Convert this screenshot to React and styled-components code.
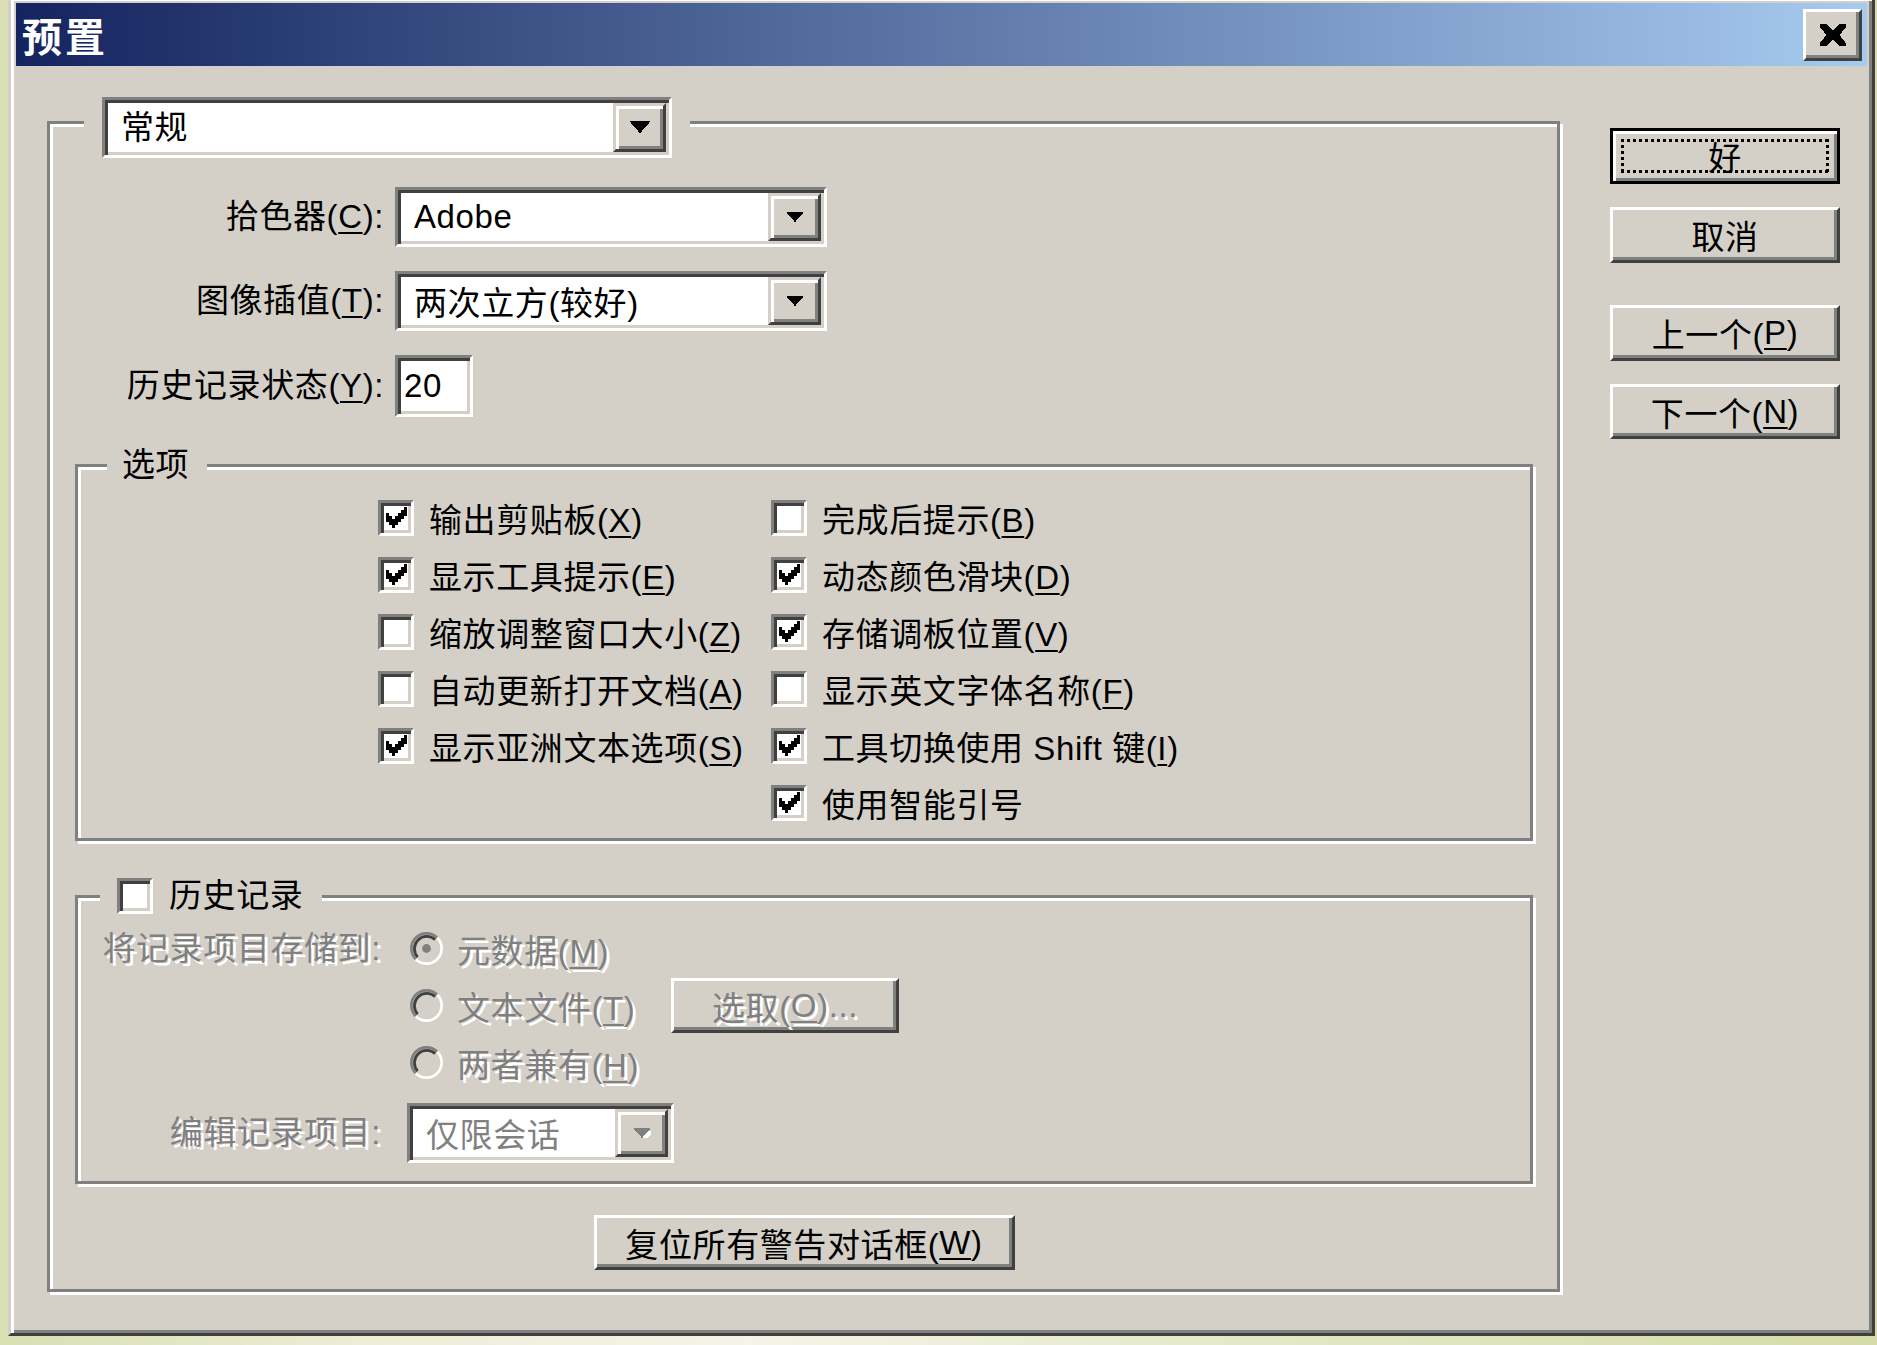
import React from 'react';
import styled, { createGlobalStyle, css } from 'styled-components';

const FONT = `"Liberation Sans", "Noto Sans CJK SC", sans-serif`;

const GlobalStyle = createGlobalStyle`
  html, body {
    margin: 0;
    padding: 0;
  }
  body {
    width: 1877px;
    height: 1345px;
    overflow: hidden;
    background: linear-gradient(90deg, #d8dfb2 0%, #eceed6 20%, #f4f4e8 40%, #e4e9c8 65%, #d5dca8 100%);
    font-family: ${FONT};
    font-size: 33px;
    letter-spacing: 0.6px;
    color: #000;
  }
`;

const sunken = css`
  border: 3px solid;
  border-color: #808080 #fff #fff #808080;
  box-shadow: inset 3px 3px 0 #404040, inset -3px -3px 0 #d4d0c8;
`;

const raised = css`
  border: 3px solid;
  border-color: #fff #404040 #404040 #fff;
  box-shadow: inset -3px -3px 0 #808080;
`;

const Page = styled.div`
  padding-left: 8px;
`;

const Dialog = styled.div`
  box-sizing: border-box;
  width: 1867px;
  height: 1341px;
  margin-top: -5px;
  padding: 5px;
  display: flex;
  flex-direction: column;
  background: #d4d0c8;
  border: 3px solid;
  border-color: #d4d0c8 #404040 #404040 #d4d0c8;
  box-shadow: inset 3px 3px 0 #fff, inset -3px -3px 0 #808080;
`;

const TitleBar = styled.div`
  flex: none;
  height: 63px;
  display: flex;
  align-items: center;
  justify-content: space-between;
  padding: 0 5px 0 6px;
  background: linear-gradient(90deg, #15245f 0%, #a6caf0 100%);
`;

const Title = styled.span`
  font-family: "Noto Sans CJK SC", sans-serif;
  font-weight: 700;
  font-size: 40px;
  letter-spacing: 3px;
  line-height: 1;
  color: #fff;
`;

const CloseButton = styled.span`
  box-sizing: border-box;
  width: 59px;
  height: 52px;
  display: flex;
  align-items: center;
  justify-content: center;
  background: #d4d0c8;
  ${raised}
`;

const Body = styled.div`
  flex: 1;
  display: flex;
  align-items: flex-start;
  padding: 31px 0 0 31px;
`;

const Group = styled.fieldset`
  box-sizing: border-box;
  margin: ${p => p.$top || 0}px 0 0 0;
  padding: 0;
  min-width: 0;
  width: ${p => (p.$width ? `${p.$width}px` : 'auto')};
  border: 3px solid #808080;
  box-shadow: inset 3px 3px 0 #fff, 3px 3px 0 #fff;
`;

const Legend = styled.legend`
  box-sizing: border-box;
  display: flex;
  align-items: ${p => (p.$alignTop ? 'flex-start' : 'center')};
  gap: 16px;
  height: ${p => p.$h || 40}px;
  margin-left: ${p => p.$left}px;
  padding: 0 ${p => p.$padR}px 0 ${p => p.$padL}px;
  background: #d4d0c8;
  line-height: 40px;
  white-space: nowrap;
`;

const MainBody = styled.div`
  display: flex;
  flex-direction: column;
  padding: 39px 24px 19px 25px;
`;

const FieldGrid = styled.div`
  display: grid;
  grid-template-columns: ${p => p.$label}px auto;
  column-gap: ${p => p.$gap}px;
  row-gap: ${p => p.$rowGap}px;
  align-items: center;
  justify-items: start;
`;

const FieldLabel = styled.span`
  justify-self: end;
  align-self: ${p => (p.$top ? 'start' : 'center')};
  line-height: ${p => (p.$top ? '57px' : '40px')};
  white-space: nowrap;
  color: ${p => (p.$disabled ? '#808080' : '#000')};
  text-shadow: ${p => (p.$disabled ? '3px 3px 0 #fff' : 'none')};
`;

const Combo = styled.div`
  box-sizing: border-box;
  width: ${p => p.$w}px;
  height: ${p => p.$h}px;
  padding: 3px;
  display: flex;
  flex: none;
  background: #fff;
  ${sunken}
`;

const ComboText = styled.span`
  flex: 1;
  display: flex;
  align-items: center;
  padding-left: ${p => p.$pad ?? 13}px;
  white-space: nowrap;
  overflow: hidden;
  color: ${p => (p.$disabled ? '#808080' : '#000')};
`;

const ArrowButton = styled.span`
  box-sizing: border-box;
  width: 53px;
  flex: none;
  display: flex;
  align-items: center;
  justify-content: center;
  background: #d4d0c8;
  border: 3px solid;
  border-color: #d4d0c8 #404040 #404040 #d4d0c8;
  box-shadow: inset 3px 3px 0 #fff, inset -3px -3px 0 #808080;
`;

const OptionsBody = styled.div`
  display: flex;
  padding: 4px 0 7px 300px;
`;

const CheckColumn = styled.div`
  display: flex;
  flex-direction: column;
  width: ${p => (p.$w ? `${p.$w}px` : 'auto')};
`;

const CheckRow = styled.div`
  height: 57px;
  display: flex;
  align-items: center;
  gap: 15px;
  white-space: nowrap;
`;

const CheckBox = styled.span`
  box-sizing: border-box;
  width: 36px;
  height: 36px;
  flex: none;
  display: flex;
  align-items: center;
  justify-content: center;
  background: #fff;
  ${sunken}
`;

const HistoryBody = styled.div`
  padding: 4px 0 18px 0;
`;

const RadioList = styled.div`
  display: flex;
  flex-direction: column;
`;

const RadioRow = styled.div`
  height: 57px;
  display: flex;
  align-items: center;
  gap: 14px;
  padding-left: 3px;
  white-space: nowrap;
`;

const Disabled = styled.span`
  color: #808080;
  text-shadow: 3px 3px 0 #fff;
  width: ${p => (p.$w ? `${p.$w}px` : 'auto')};
`;

const Button = styled.button`
  box-sizing: border-box;
  width: ${p => p.$w}px;
  height: ${p => p.$h}px;
  margin: ${p => p.$mt || 0}px 0 0 0;
  padding: 0;
  flex: none;
  display: flex;
  align-items: center;
  justify-content: center;
  font: inherit;
  letter-spacing: inherit;
  white-space: nowrap;
  color: ${p => (p.$disabled ? '#808080' : '#000')};
  text-shadow: ${p => (p.$disabled ? '3px 3px 0 #fff' : 'none')};
  background: #d4d0c8;
  ${raised}
`;

const DefaultButton = styled(Button)`
  padding: 8px;
  border: 3px solid #000;
  box-shadow: inset 3px 3px 0 #fff, inset -3px -3px 0 #808080;
`;

const FocusRing = styled.span`
  flex: 1;
  align-self: stretch;
  display: flex;
  align-items: center;
  justify-content: center;
  background:
    repeating-linear-gradient(90deg, #000 0 3px, transparent 3px 6px) top left / 100% 3px no-repeat,
    repeating-linear-gradient(90deg, #000 0 3px, transparent 3px 6px) bottom left / 100% 3px no-repeat,
    repeating-linear-gradient(180deg, #000 0 3px, transparent 3px 6px) top left / 3px 100% no-repeat,
    repeating-linear-gradient(180deg, #000 0 3px, transparent 3px 6px) top right / 3px 100% no-repeat;
`;

const ResetButton = styled(Button)`
  align-self: center;
`;

const SideColumn = styled.div`
  display: flex;
  flex-direction: column;
  margin: 31px 0 0 50px;
`;

const Key = styled.span`
  text-decoration: underline;
  text-decoration-thickness: 2px;
  text-underline-offset: 4px;
`;

const Mnemonic = ({ text }) => {
  const i = text.indexOf('&');
  if (i < 0) return text;
  return (
    <>
      {text.slice(0, i)}
      <Key>{text[i + 1]}</Key>
      {text.slice(i + 2)}
    </>
  );
};

const CHECK_PIXELS = [
  [6, 0, 1], [5, 1, 2], [0, 2, 1], [4, 2, 3], [0, 3, 2],
  [3, 3, 3], [0, 4, 5], [1, 5, 3], [2, 6, 1],
];

const CheckMark = () => (
  <svg width="21" height="21" viewBox="0 0 7 7" shapeRendering="crispEdges">
    {CHECK_PIXELS.map(([x, y, w]) => (
      <rect key={`${x}-${y}`} x={x} y={y} width={w} height="1" fill="#000" />
    ))}
  </svg>
);

const Arrow = ({ disabled, size = 18 }) => (
  <svg width={size} height={size * 0.56} viewBox="0 0 7 4" shapeRendering="crispEdges">
    {disabled && <path d="M1.5 1h7l-3.5 4z" fill="#fff" />}
    <path d="M0 0h7l-3.5 4z" fill={disabled ? '#808080' : '#000'} />
  </svg>
);

const CloseIcon = () => (
  <svg width="26" height="24" viewBox="0 0 8 7" shapeRendering="crispEdges">
    <path
      d="M0 0h2l2 2 2-2h2v1l-2 2.5 2 2.5v1h-2l-2-2-2 2h-2v-1l2-2.5-2-2.5z"
      fill="#000"
    />
  </svg>
);

const Radio = ({ checked }) => (
  <svg width="33" height="33" viewBox="0 0 12 12">
    <circle cx="6" cy="6" r="4.2" fill="#d4d0c8" />
    <path d="M2.11 9.89A5.5 5.5 0 0 1 9.89 2.11" fill="none" stroke="#808080" strokeWidth="1" />
    <path d="M2.82 9.18A4.5 4.5 0 0 1 9.18 2.82" fill="none" stroke="#404040" strokeWidth="1" />
    <path d="M9.89 2.11A5.5 5.5 0 0 1 2.11 9.89" fill="none" stroke="#fff" strokeWidth="1" />
    <path d="M9.18 2.82A4.5 4.5 0 0 1 2.82 9.18" fill="none" stroke="#d4d0c8" strokeWidth="1" />
    {checked && <circle cx="6" cy="6" r="1.6" fill="#808080" />}
  </svg>
);

const Check = ({ checked }) => <CheckBox>{checked && <CheckMark />}</CheckBox>;

const ComboField = ({ w, h, text, disabled, arrow }) => (
  <Combo $w={w} $h={h}>
    <ComboText $disabled={disabled}>{text}</ComboText>
    <ArrowButton>
      <Arrow disabled={disabled} size={arrow} />
    </ArrowButton>
  </Combo>
);

const OPTIONS_LEFT = [
  ['输出剪贴板(&X)', true],
  ['显示工具提示(&E)', true],
  ['缩放调整窗口大小(&Z)', false],
  ['自动更新打开文档(&A)', false],
  ['显示亚洲文本选项(&S)', true],
];

const OPTIONS_RIGHT = [
  ['完成后提示(&B)', false],
  ['动态颜色滑块(&D)', true],
  ['存储调板位置(&V)', true],
  ['显示英文字体名称(&F)', false],
  ['工具切换使用 Shift 键(&I)', true],
  ['使用智能引号', true],
];

const CheckList = ({ items, width }) => (
  <CheckColumn $w={width}>
    {items.map(([label, checked]) => (
      <CheckRow key={label}>
        <Check checked={checked} />
        <span>
          <Mnemonic text={label} />
        </span>
      </CheckRow>
    ))}
  </CheckColumn>
);

const App = () => (
  <Page>
    <GlobalStyle />
    <Dialog>
      <TitleBar>
        <Title>预置</Title>
        <CloseButton>
          <CloseIcon />
        </CloseButton>
      </TitleBar>
      <Body>
        <Group $width={1513}>
          <Legend $left={34} $padL={18} $padR={18} $h={51} $alignTop>
            <ComboField w={570} h={61} text="常规" arrow={22} />
          </Legend>
          <MainBody>
            <FieldGrid $label={309} $gap={11} $rowGap={24}>
              <FieldLabel>
                <Mnemonic text="拾色器(&C):" />
              </FieldLabel>
              <ComboField w={432} h={60} text="Adobe" />
              <FieldLabel>
                <Mnemonic text="图像插值(&T):" />
              </FieldLabel>
              <ComboField w={432} h={60} text="两次立方(较好)" />
              <FieldLabel>
                <Mnemonic text="历史记录状态(&Y):" />
              </FieldLabel>
              <Combo $w={78} $h={62}>
                <ComboText $pad={3}>20</ComboText>
              </Combo>
            </FieldGrid>

            <Group $top={28}>
              <Legend $left={29} $padL={15} $padR={18}>
                选项
              </Legend>
              <OptionsBody>
                <CheckList items={OPTIONS_LEFT} width={393} />
                <CheckList items={OPTIONS_RIGHT} />
              </OptionsBody>
            </Group>

            <Group $top={35}>
              <Legend $left={22} $padL={17} $padR={19}>
                <Check checked={false} />
                历史记录
              </Legend>
              <HistoryBody>
                <FieldGrid $label={303} $gap={26} $rowGap={12}>
                  <FieldLabel $top $disabled>
                    将记录项目存储到:
                  </FieldLabel>
                  <RadioList>
                    <RadioRow>
                      <Radio checked />
                      <Disabled>
                        <Mnemonic text="元数据(&M)" />
                      </Disabled>
                    </RadioRow>
                    <RadioRow>
                      <Radio />
                      <Disabled $w={200}>
                        <Mnemonic text="文本文件(&T)" />
                      </Disabled>
                      <Button $w={228} $h={55} $disabled>
                        <Mnemonic text="选取(&O)..." />
                      </Button>
                    </RadioRow>
                    <RadioRow>
                      <Radio />
                      <Disabled>
                        <Mnemonic text="两者兼有(&H)" />
                      </Disabled>
                    </RadioRow>
                  </RadioList>
                  <FieldLabel $disabled>编辑记录项目:</FieldLabel>
                  <ComboField w={267} h={60} text="仅限会话" disabled />
                </FieldGrid>
              </HistoryBody>
            </Group>

            <ResetButton $w={421} $h={55} $mt={31}>
              <Mnemonic text="复位所有警告对话框(&W)" />
            </ResetButton>
          </MainBody>
        </Group>

        <SideColumn>
          <DefaultButton $w={230} $h={56}>
            <FocusRing>好</FocusRing>
          </DefaultButton>
          <Button $w={230} $h={56} $mt={23}>
            取消
          </Button>
          <Button $w={230} $h={56} $mt={42}>
            <Mnemonic text="上一个(&P)" />
          </Button>
          <Button $w={230} $h={55} $mt={23}>
            <Mnemonic text="下一个(&N)" />
          </Button>
        </SideColumn>
      </Body>
    </Dialog>
  </Page>
);

export default App;
